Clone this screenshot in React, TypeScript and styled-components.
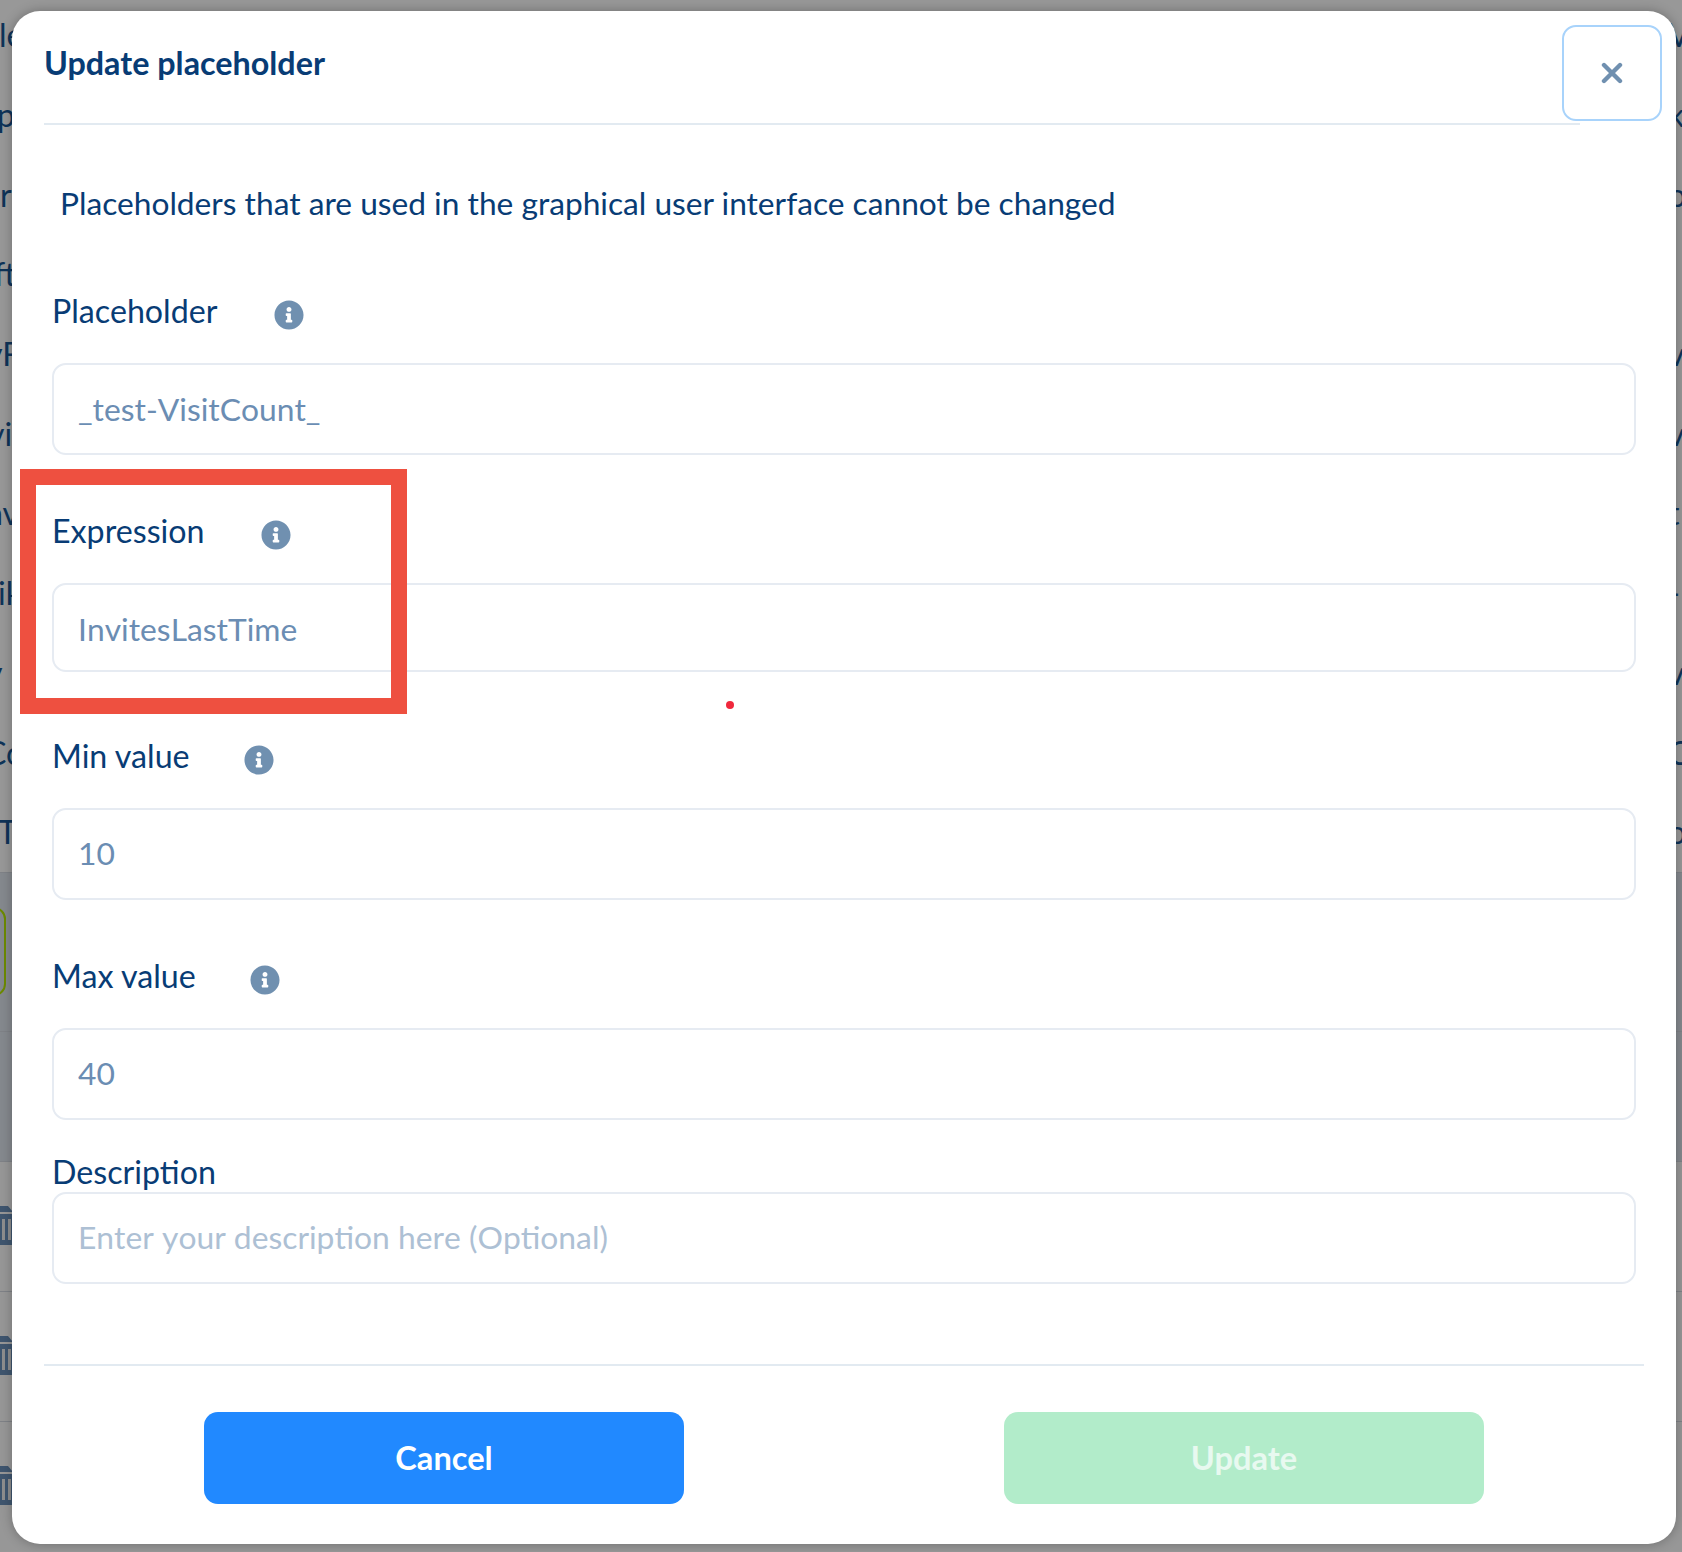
import React from "react";
import styled, { createGlobalStyle } from "styled-components";
import { FaInfoCircle } from "react-icons/fa";

const Global = createGlobalStyle`
  html, body { margin: 0; padding: 0; background: #989898; }
  * { box-sizing: border-box; }
`;

const Page = styled.div`
  position: relative;
  width: 1682px;
  height: 1552px;
  overflow: hidden;
  font-family: Lato, "Open Sans", sans-serif;
  background: #989898;
`;

const Backdrop = styled.div`
  display: flex;
  flex-direction: column;
  margin-top: -5px;
`;

const TextRow = styled.div`
  display: grid;
  grid-template-columns: 24px 1fr 14px;
  align-items: center;
  height: 79.7px;
  font-size: 32px;
  color: #0e3358;
`;

const LeftCut = styled.div<{ $indent: number }>`
  overflow: hidden;
  white-space: nowrap;
  text-indent: ${(p) => p.$indent}px;
`;

const RightCut = styled.div`
  overflow: hidden;
  white-space: nowrap;
`;

const Band = styled.div<{ $dark?: boolean; $height: number }>`
  display: flex;
  align-items: center;
  height: ${(p) => p.$height}px;
  background: ${(p) => (p.$dark ? "#85898e" : "#979797")};
  border-top: 1px solid #7f8287;
  flex: none;
`;

const GreenEdge = styled.div`
  width: 40px;
  height: 89px;
  margin-left: -34px;
  border: 2px solid #6c8a00;
  border-radius: 12px;
`;

const Overlay = styled.div`
  position: absolute;
  inset: 0;
  padding: 11px 6px 8px 12px;
`;

const Modal = styled.div`
  position: relative;
  display: flex;
  flex-direction: column;
  height: 1533px;
  background: #fff;
  border-radius: 28px;
  box-shadow: 0 0 12px rgba(0, 0, 0, 0.28);
`;

const Header = styled.header`
  display: flex;
  align-items: center;
  height: 114px;
  margin: 0 96px 0 32px;
  padding: 0 0 8px;
  border-bottom: 2px solid #e2eaf1;
  flex: none;
`;

const Title = styled.h2`
  margin: 0;
  font-size: 32.3px;
  font-weight: 700;
  color: #083c75;
  line-height: 40px;
`;

const CloseButton = styled.button`
  position: absolute;
  top: 14px;
  right: 14px;
  width: 100px;
  height: 96px;
  display: flex;
  align-items: center;
  justify-content: center;
  padding: 0;
  background: #fff;
  border: 2px solid #a8d3fb;
  border-radius: 14px;
`;

const Notice = styled.p`
  margin: 58px 0 0 48px;
  font-size: 31.7px;
  line-height: 40px;
  color: #083c75;
`;

const Form = styled.div`
  display: flex;
  flex-direction: column;
  padding: 0 40px;
`;

const Field = styled.div<{ $top: number; $gap: number }>`
  display: flex;
  flex-direction: column;
  gap: ${(p) => p.$gap}px;
  margin-top: ${(p) => p.$top}px;
`;

const LabelRow = styled.div<{ $iconGap: number }>`
  display: flex;
  align-items: center;
  gap: ${(p) => p.$iconGap}px;
  height: 40px;
  color: #7090b0;
  & > svg {
    margin-top: 7px;
  }
`;

const Label = styled.label`
  font-size: 32.2px;
  line-height: 40px;
  color: #083c75;
`;

const Input = styled.input<{ $height: number; $nudge: number }>`
  width: 100%;
  height: ${(p) => p.$height}px;
  padding: ${(p) => Math.max(p.$nudge, 0)}px 24px ${(p) => Math.max(-p.$nudge, 0)}px;
  background: #fff;
  border: 2px solid #e6ebf2;
  border-radius: 14px;
  outline: none;
  font-family: inherit;
  font-size: 31.8px;
  font-kerning: none;
  color: #6b8db3;
  &::placeholder {
    color: #adc0d4;
    opacity: 1;
  }
`;

const Footer = styled.footer`
  display: flex;
  justify-content: space-between;
  margin: 80px 32px 0;
  padding: 46px 160px 0;
  border-top: 2px solid #e2eaf1;
`;

const ActionButton = styled.button<{ $variant: "cancel" | "update" }>`
  width: 480px;
  height: 92px;
  padding: 0 0 2px;
  border: none;
  border-radius: 14px;
  font-family: inherit;
  font-size: 32.6px;
  font-weight: 700;
  color: ${(p) => (p.$variant === "cancel" ? "#fff" : "#e8f9f0")};
  background: ${(p) => (p.$variant === "cancel" ? "#2189ff" : "#b2ecca")};
`;

const Highlight = styled.div`
  position: absolute;
  left: 8px;
  top: 458px;
  width: 387px;
  height: 245px;
  border: 16px solid #ee5040;
  pointer-events: none;
`;

const RedDot = styled.span`
  position: absolute;
  left: 714px;
  top: 690px;
  width: 8px;
  height: 8px;
  border-radius: 50%;
  background: #f0283c;
`;

const rows: [string, number, string][] = [
  ["le", -1, "V"], ["p", -3, "k"], ["r", 0, "o"], ["ft", -6, "i"], ["yF", -14, "v"], ["vi", -12, "v"],
  ["av", -13, "t"], ["ik", -2, "-"], ["y", -14, "v"], ["Co", -15, "C"], ["T", -2, "o"],
];

const Trash = () => (
  <svg width="14" height="40" viewBox="0 0 14 40" aria-hidden="true">
    <path d="M0 0H8L13 6H0Z" fill="#3f566f" />
    <rect x="0" y="8" width="14" height="31" fill="#3f566f" />
    <rect x="2" y="13" width="3" height="21" fill="#8e8e8e" />
    <rect x="8" y="13" width="3" height="21" fill="#8e8e8e" />
  </svg>
);

const CloseIcon = () => (
  <svg width="22" height="22" viewBox="0 0 22 22" aria-hidden="true">
    <path d="M3 3L19 19M19 3L3 19" stroke="#7090b0" strokeWidth="4.4" strokeLinecap="round" />
  </svg>
);

const fields = [
  { label: "Placeholder", value: "_test-VisitCount_", top: 68, gap: 32, height: 92, nudge: 0, iconGap: 57, info: true },
  { label: "Expression", value: "InvitesLastTime", top: 56, gap: 32, height: 89, nudge: 2, iconGap: 56, info: true },
  { label: "Min value", value: "10", top: 64, gap: 32, height: 92, nudge: -2, iconGap: 54, info: true },
  { label: "Max value", value: "40", top: 56, gap: 32, height: 92, nudge: -2, iconGap: 54, info: true },
  { label: "Description", value: "", top: 32, gap: 0, height: 92, nudge: -2, iconGap: 56, info: false },
];

export default function App() {
  return (
    <Page>
      <Global />
      <Backdrop>
        {rows.map(([l, indent, r], i) => (
          <TextRow key={i}>
            <LeftCut $indent={indent}>{l}</LeftCut>
            <span />
            <RightCut>{r}</RightCut>
          </TextRow>
        ))}
        <Band $dark $height={159}>
          <GreenEdge />
        </Band>
        <Band $dark $height={130} />
        <Band $height={130}>
          <Trash />
        </Band>
        <Band $height={130}>
          <Trash />
        </Band>
        <Band $height={130}>
          <Trash />
        </Band>
      </Backdrop>
      <Overlay>
        <Modal>
          <Header>
            <Title>Update placeholder</Title>
          </Header>
          <CloseButton aria-label="Close">
            <CloseIcon />
          </CloseButton>
          <Notice>Placeholders that are used in the graphical user interface cannot be changed</Notice>
          <Form>
            {fields.map((f) => (
              <Field key={f.label} $top={f.top} $gap={f.gap}>
                <LabelRow $iconGap={f.iconGap}>
                  <Label>{f.label}</Label>
                  {f.info && <FaInfoCircle size={30} />}
                </LabelRow>
                <Input
                  $height={f.height}
                  $nudge={f.nudge}
                  readOnly
                  value={f.value}
                  placeholder={f.info ? undefined : "Enter your description here (Optional)"}
                />
              </Field>
            ))}
          </Form>
          <Footer>
            <ActionButton $variant="cancel">Cancel</ActionButton>
            <ActionButton $variant="update">Update</ActionButton>
          </Footer>
          <Highlight />
          <RedDot />
        </Modal>
      </Overlay>
    </Page>
  );
}
